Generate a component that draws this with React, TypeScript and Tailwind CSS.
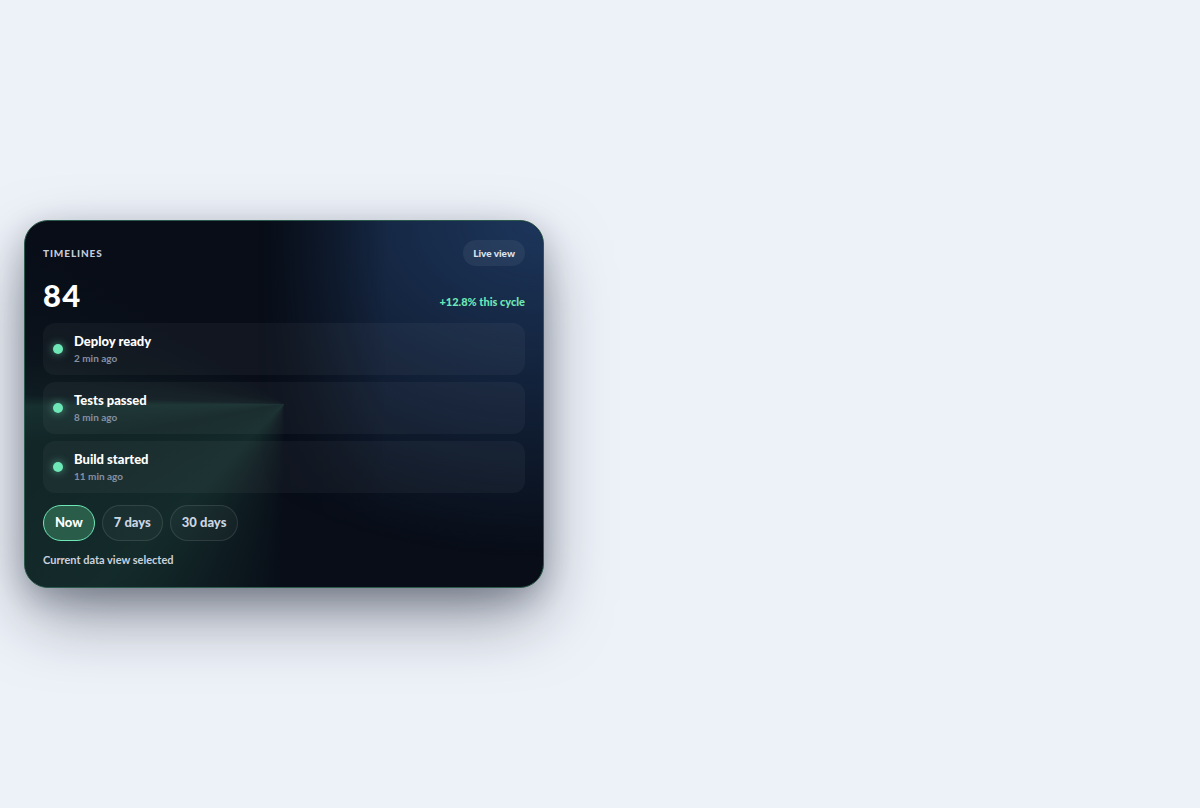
import React from "react";

const rows = [
  { title: "Deploy ready", time: "2 min ago" },
  { title: "Tests passed", time: "8 min ago" },
  { title: "Build started", time: "11 min ago" },
];

export default function App() {
  return (
    <div
      className="min-h-screen w-full bg-[#edf1f8] flex items-center pl-6"
      style={{ fontFamily: "Lato, 'Noto Sans', sans-serif" }}
    >
      <div className="relative w-[520px] h-[368px] rounded-[24px] border border-[#2c5a4c] bg-[#080d17] overflow-hidden shadow-[0_30px_70px_-8px_rgba(15,23,42,0.5),0_10px_30px_rgba(15,23,42,0.22)]">
        <div className="absolute inset-0 bg-[radial-gradient(ellipse_at_100%_0%,rgba(36,68,115,0.75)_0%,rgba(36,68,115,0.38)_32%,rgba(8,13,23,0)_65%)] [mask-image:linear-gradient(to_right,transparent_45%,black_70%)]" />
        <div className="absolute inset-0 bg-[conic-gradient(from_180deg_at_50%_50%,rgba(8,13,23,0)_0deg,rgba(38,88,72,0.4)_45deg,rgba(40,92,76,0.3)_80deg,rgba(48,108,90,0.36)_89.5deg,rgba(40,88,74,0.2)_92deg,rgba(40,80,70,0.08)_102deg,rgba(8,13,23,0)_125deg,rgba(8,13,23,0)_360deg)]" />
        <div className="relative flex flex-col h-full p-[18px] pt-[19px]">
          <div className="flex items-center justify-between">
            <span className="text-[10px] font-black tracking-[0.09em] text-[#c3ccdb]">TIMELINES</span>
            <span className="h-[26px] px-[10px] rounded-full bg-white/[0.06] text-[10px] font-black text-[#dde3ee] flex items-center">
              Live view
            </span>
          </div>
          <div className="flex items-end justify-between mt-[11px]">
            <span className="text-[31px] leading-[36px] font-black tracking-[0.04em] text-white">84</span>
            <span className="text-[11px] font-black text-[#6ee7b7] mb-[3px]">+12.8% this cycle</span>
          </div>
          <div className="flex flex-col gap-[7px] mt-[10px]">
            {rows.map((r) => (
              <div
                key={r.title}
                className="h-[52px] rounded-[12px] bg-white/[0.04] flex items-center pl-[10px] gap-[11px]"
              >
                <span className="w-[10px] h-[10px] rounded-full bg-[#6ee7b7] shadow-[0_0_8px_rgba(110,231,183,0.6)]" />
                <div className="flex flex-col">
                  <span className="text-[13px] leading-[16px] font-black text-white">{r.title}</span>
                  <span className="text-[10px] leading-[14px] font-bold text-[#8590a3] mt-[2px]">{r.time}</span>
                </div>
              </div>
            ))}
          </div>
          <div className="flex gap-[7px] mt-[12px]">
            <button className="h-[36px] px-[11px] rounded-full border border-[#6ee7b7] bg-[#2a5d49] text-[13px] font-black text-white">
              Now
            </button>
            <button className="h-[36px] px-[11px] rounded-full border border-white/10 bg-white/[0.03] text-[13px] font-black text-[#cbd5e1]">
              7 days
            </button>
            <button className="h-[36px] px-[11px] rounded-full border border-white/10 bg-white/[0.03] text-[13px] font-black text-[#cbd5e1]">
              30 days
            </button>
          </div>
          <div className="mt-[11px] text-[11px] font-bold text-[#c9d1de]">Current data view selected</div>
        </div>
      </div>
    </div>
  );
}
